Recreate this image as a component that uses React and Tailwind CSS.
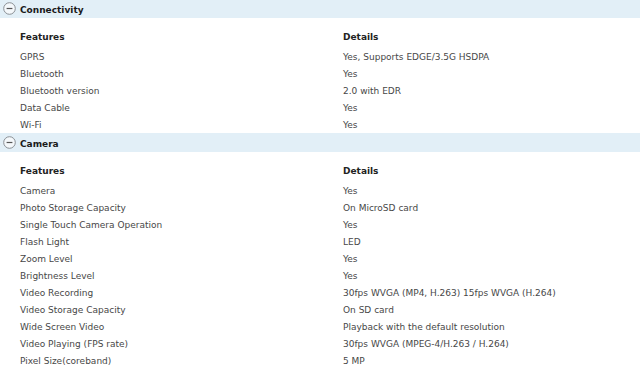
import React from "react";

const sections = [
    {
        title: "Connectivity",
        rows: [
            ["GPRS", "Yes, Supports EDGE/3.5G HSDPA"],
            ["Bluetooth", "Yes"],
            ["Bluetooth version", "2.0 with EDR"],
            ["Data Cable", "Yes"],
            ["Wi-Fi", "Yes"],
        ],
    },
    {
        title: "Camera",
        rows: [
            ["Camera", "Yes"],
            ["Photo Storage Capacity", "On MicroSD card"],
            ["Single Touch Camera Operation", "Yes"],
            ["Flash Light", "LED"],
            ["Zoom Level", "Yes"],
            ["Brightness Level", "Yes"],
            ["Video Recording", "30fps WVGA (MP4, H.263) 15fps WVGA (H.264)"],
            ["Video Storage Capacity", "On SD card"],
            ["Wide Screen Video", "Playback with the default resolution"],
            ["Video Playing (FPS rate)", "30fps WVGA (MPEG-4/H.263 / H.264)"],
            ["Pixel Size(coreband)", "5 MP"],
        ],
    },
];

const MinusCircle = () => (
    <svg width="13" height="13" viewBox="0 0 13 13" className="shrink-0">
        <circle cx="6.5" cy="6.5" r="5.8" fill="#f4f8fb" stroke="#8a8f94" strokeWidth="1"/>
        <line x1="3.6" y1="6.5" x2="9.4" y2="6.5" stroke="#555" strokeWidth="1.2"/>
    </svg>
);

const Section = ({title, rows}) => {
    return (
        <div className="pb-px">
            {/*HEADER*/}
            <div className="h-[19px] bg-[#e2eff7] flex items-center pl-[3px] gap-[4px]">
                <MinusCircle/>
                <span className="mt-[3px] font-bold text-[#1a1a1a]">{title}</span>
            </div>
            <div className="pt-[9px]">
                <div className="h-[17px] pt-[4px] grid grid-cols-[323px_1fr] items-center pl-5 font-bold text-[#222]">
                    <span>Features</span>
                    <span>Details</span>
                </div>
                <div className="mt-[3px]">
                    {rows.map(([f, d]) => (
                        <div key={f} className="h-[17px] pt-[4px] grid grid-cols-[323px_1fr] items-center pl-5 text-[#474747]">
                            <span>{f}</span>
                            <span>{d}</span>
                        </div>
                    ))}
                </div>
            </div>
        </div>
    )
}

export default function App() {
    return (
        <div className="w-[640px] h-[381px] overflow-hidden bg-white">
            <div className="-mt-px text-[9px] leading-none" style={{fontFamily: "'DejaVu Sans', Verdana, sans-serif"}}>
                {sections.map(s => <Section key={s.title} {...s}/>)}
            </div>
        </div>
    )
}
